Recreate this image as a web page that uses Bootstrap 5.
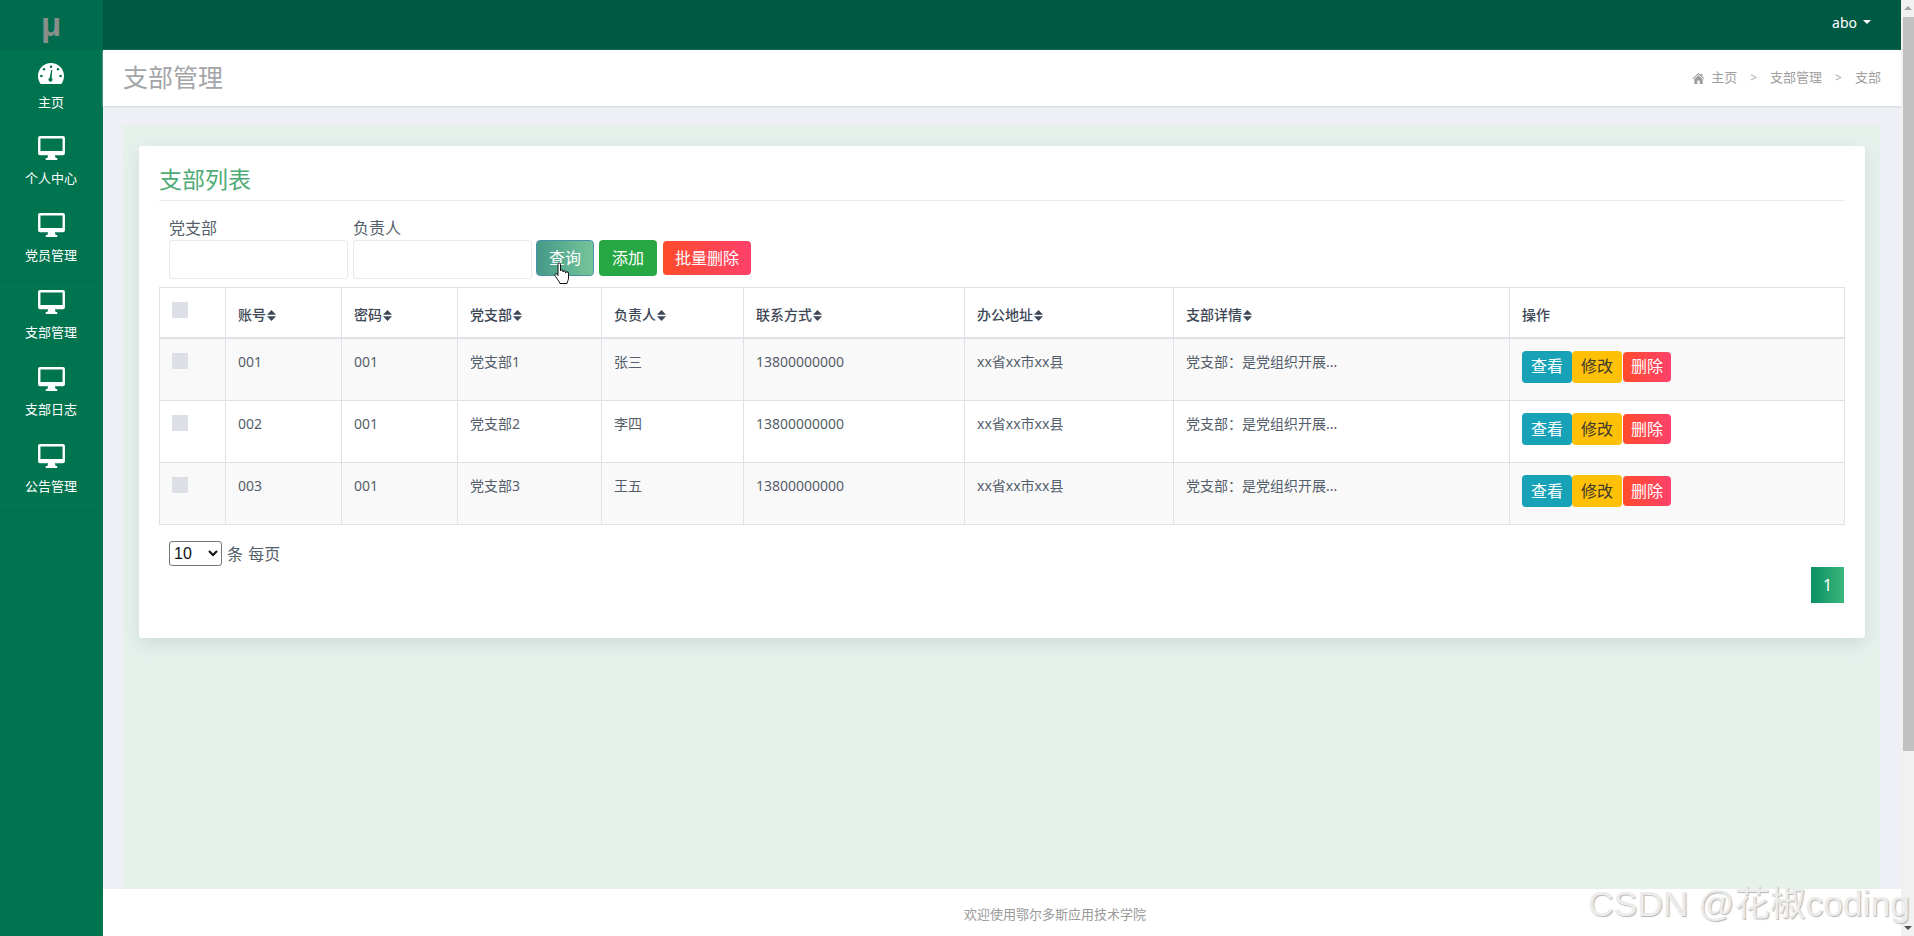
<!DOCTYPE html>
<html lang="zh-CN">
<head>
    <meta charset="UTF-8">
    <title>支部管理</title>
    <link href="https://cdn.jsdelivr.net/npm/bootstrap@5.3.0/dist/css/bootstrap.min.css" rel="stylesheet">
    <style>
        html, body { height: 100%; overflow: hidden; }
        body { font-family: "Noto Sans", "Noto Sans CJK SC", sans-serif; font-size: 14px; color: #555e6b; background: #eef0f5; }
        .app-shell { height: 936px; }
        .side-menu { width: 103px; background: #00734f; flex: none; }
        .side-logo { height: 50px; background: #006c4d; color: #8a8f8c; font-family: "Liberation Sans", sans-serif; font-size: 33px; font-weight: 700; line-height: 50px; text-align: center; padding-right: 1px; }
        .side-item { height: 77px; border-bottom: 1px solid #006e4c; color: #fff; font-size: 13px; text-align: center; padding: 9px 1px 0 0; }
        .side-item-home { padding-top: 13px; }
        .side-item svg { display: block; margin: 0 auto 9px; }
        .top-strip { height: 50px; background: #005a43; color: #fff; font-size: 14px; padding: 0 30px 6px 0; }
        .user-caret { width: 0; height: 0; border: 4px solid transparent; border-top-color: #fff; border-bottom: 0; margin-left: 6px; }
        .page-head { height: 56px; background: #fff; box-shadow: 0 1px 2px #cfd2da; padding: 0 20px 0 20px; position: relative; }
        .page-head h1 { font-size: 25px; font-weight: 400; color: #a3a5a9; margin: 0 0 2px; }
        .crumbs { color: #a0a0a0; font-size: 13px; gap: 13px; }
        .crumbs i { font-style: normal; font-size: 12px; color: #aaa; }
        .crumbs svg { margin-right: 6px; }
        .page-body { padding: 19px 21px 0 20px; height: 783px; }
        .green-panel { background: #e7f1ec; height: 764px; padding: 21px 15px 0 16px; }
        .list-panel { height: 492px; background: #fff; border-radius: 3px; box-shadow: 0 6px 18px rgba(80, 100, 130, .16); padding: 20px; }
        .list-title { color: #4eab77; font-size: 23px; font-weight: 400; line-height: 26px; height: 35px; margin: 0 0 15px; border-bottom: 1px solid #e9ecef; }
        .filter-bar { padding-left: 10px; height: 71px; }
        .filter-bar label { display: block; font-size: 16px; line-height: 24px; color: #555e6b; }
        .filter-input { display: block; width: 179px; height: 39px; border: 1px solid #e6e9ee; border-radius: 3px; margin-right: 5px; }
        .btn-q, .btn-a, .btn-d { color: #fff; font-size: 16px; border-radius: 4px; padding: 0; border: 0; margin-top: 24px; }
        .btn-q { width: 58px; height: 36px; background: linear-gradient(to right, #459a88, #75c49a); border: 1px solid #4a8fa8; margin-left: -1px; }
        .btn-a { width: 58px; height: 36px; background: #28a745; margin-left: 5px; }
        .btn-d { width: 88px; height: 34px; margin: 25px 0 0 6px; background: linear-gradient(to right, #ff4b2b, #ff416c); }
        .grid-table { margin: 0; width: 1686px; table-layout: fixed; border-color: #dee2e6; color: #555e6b; }
        .grid-table th { height: 50px; font-size: 14px; font-weight: 500; color: #3e4756; padding: 12px; border-bottom-width: 2px; vertical-align: bottom; line-height: 21px; }
        .grid-table td { height: 62px; padding: 12px; vertical-align: top; font-size: 14px; line-height: 21px; }
        .grid-table tbody tr:first-child td { height: 63px; }
        .grid-table th:first-child { vertical-align: top; }
        .grid-table.table-striped > tbody > tr:nth-of-type(odd) > * { --bs-table-accent-bg: #f9f9fa; color: #555e6b; }
        .tick-box { display: block; width: 16px; height: 16px; margin-top: 2px; background: #dcdfe6; }
        .sort-arrows { display: inline-block; vertical-align: -1px; margin-left: 1px; }
        .row-btn { height: 32px; width: 50px; font-size: 16px; padding: 0; border: 0; color: #fff; border-radius: 4px; }
        .row-btn-view { background: #17a2b8; }
        .row-btn-edit { background: #ffc107; color: #3d3a2a; }
        .row-btn-del { width: 48px; height: 30px; margin-left: 1px; background: linear-gradient(to right, #ff4b2b, #ff416c); }
        .size-select { width: 53px; height: 25px; font-size: 16px; color: #111; border: 1px solid #767676; border-radius: 3px; background: #fff; font-family: "Liberation Sans", sans-serif; }
        .size-row { padding: 16px 0 0 10px; font-size: 16px; gap: 5px; word-spacing: 1px; }
        .page-one { width: 33px; height: 36px; background: linear-gradient(to right, #0a8f66, #3cb67a); color: #fff; font-size: 16px; margin: 1px 1px 0 auto; }
        .foot-strip { height: 47px; background: #fff; color: #9a9a9a; font-size: 13px; padding: 4px 0 0 106px; }
        .fake-scroll { width: 13px; flex: none; background: #f1f1f1; position: relative; }
        .fake-scroll-thumb { width: 11px; height: 734px; margin: 17px 0 0 2px; background: #c1c1c1; }
        .scroll-up, .scroll-down { position: absolute; left: 3px; width: 0; height: 0; border: 4px solid transparent; }
        .scroll-up { top: 6px; border-top: 0; border-bottom-color: #a3a3a3; }
        .scroll-down { bottom: 6px; border-bottom: 0; border-top-color: #505050; }
        .water-mark { position: absolute; right: 4px; bottom: 12px; font-family: "Liberation Sans", "Noto Sans CJK SC", sans-serif; font-size: 35.5px; line-height: 40px; color: #ececec; text-shadow: 1px 1px 1px #b5b5b5; white-space: nowrap; }
        .hand-cursor { position: absolute; left: 554px; top: 262px; }
    </style>
</head>
<body>
<div class="app-shell d-flex position-relative">
    <!-- Sidebar -->
    <div class="side-menu">
        <div class="side-logo">μ</div>
        <div class="side-item side-item-home">
            <svg width="26" height="21" viewBox="0 0 26 21"><path fill="#fff" fill-rule="evenodd" d="M13 0C5.800 0 0 5.800 0 13c0 2.900 1 5.700 2.700 7.900l.3.100h20l.3-.1C25 18.700 26 15.900 26 13 26 5.800 20.200 0 13 0ZM13 2.400a1.300 1.300 0 1 1 0 2.600 1.300 1.300 0 0 1 0-2.600ZM6 5a1.300 1.300 0 1 1 0 2.600A1.300 1.300 0 0 1 6 5Zm14 0a1.300 1.300 0 1 1 0 2.600A1.300 1.300 0 0 1 20 5ZM3.400 11.700a1.300 1.300 0 1 1 0 2.600 1.300 1.300 0 0 1 0-2.600Zm19.200 0a1.300 1.300 0 1 1 0 2.600 1.300 1.300 0 0 1 0-2.600ZM14.300 7l-.6 8a2 2 0 1 1-2.100-.1L13.300 7Z"/></svg>
            主页
        </div>
        <div class="side-item">
            <svg width="27" height="24" viewBox="0 0 28 25"><path fill="#fff" fill-rule="evenodd" d="M2 0h24a2 2 0 0 1 2 2v16a2 2 0 0 1-2 2h-8.500l.8 3H20v2H8v-2h1.700l.8-3H2a2 2 0 0 1-2-2V2a2 2 0 0 1 2-2Zm.5 2.500v13h23v-13Z"/></svg>
            个人中心
        </div>
        <div class="side-item">
            <svg width="27" height="24" viewBox="0 0 28 25"><path fill="#fff" fill-rule="evenodd" d="M2 0h24a2 2 0 0 1 2 2v16a2 2 0 0 1-2 2h-8.500l.8 3H20v2H8v-2h1.700l.8-3H2a2 2 0 0 1-2-2V2a2 2 0 0 1 2-2Zm.5 2.500v13h23v-13Z"/></svg>
            党员管理
        </div>
        <div class="side-item">
            <svg width="27" height="24" viewBox="0 0 28 25"><path fill="#fff" fill-rule="evenodd" d="M2 0h24a2 2 0 0 1 2 2v16a2 2 0 0 1-2 2h-8.500l.8 3H20v2H8v-2h1.700l.8-3H2a2 2 0 0 1-2-2V2a2 2 0 0 1 2-2Zm.5 2.500v13h23v-13Z"/></svg>
            支部管理
        </div>
        <div class="side-item">
            <svg width="27" height="24" viewBox="0 0 28 25"><path fill="#fff" fill-rule="evenodd" d="M2 0h24a2 2 0 0 1 2 2v16a2 2 0 0 1-2 2h-8.500l.8 3H20v2H8v-2h1.700l.8-3H2a2 2 0 0 1-2-2V2a2 2 0 0 1 2-2Zm.5 2.500v13h23v-13Z"/></svg>
            支部日志
        </div>
        <div class="side-item">
            <svg width="27" height="24" viewBox="0 0 28 25"><path fill="#fff" fill-rule="evenodd" d="M2 0h24a2 2 0 0 1 2 2v16a2 2 0 0 1-2 2h-8.500l.8 3H20v2H8v-2h1.700l.8-3H2a2 2 0 0 1-2-2V2a2 2 0 0 1 2-2Zm.5 2.500v13h23v-13Z"/></svg>
            公告管理
        </div>
    </div>

    <!-- Main -->
    <div class="flex-grow-1 d-flex flex-column">
        <div class="top-strip d-flex align-items-center justify-content-end">abo<span class="user-caret"></span></div>
        <div class="page-head d-flex align-items-center justify-content-between">
            <h1>支部管理</h1>
            <div class="crumbs d-flex align-items-center">
                <span><svg width="13" height="11" viewBox="0 0 12 11"><path fill="#9c9c9c" d="M6 0 0 5.500l.7.700L6 1.500l5.300 4.700.7-.7L9.800 3.500V.7H8.300v1.400ZM1.800 6.300V11h3V7.500h2.400V11h3V6.300L6 2.600Z"/></svg>主页</span>
                <i>&gt;</i><span>支部管理</span><i>&gt;</i><span>支部</span>
            </div>
        </div>
        <div class="page-body">
            <div class="green-panel">
                <div class="list-panel">
                    <h5 class="list-title">支部列表</h5>
                    <div class="filter-bar d-flex align-items-start">
                        <div><label>党支部</label><input class="filter-input" type="text"></div>
                        <div><label>负责人</label><input class="filter-input" type="text"></div>
                        <button class="btn-q" type="button">查询</button>
                        <button class="btn-a" type="button">添加</button>
                        <button class="btn-d" type="button">批量删除</button>
                    </div>
                    <table class="table table-bordered table-striped grid-table">
                        <colgroup>
                            <col style="width:66px"><col style="width:116px"><col style="width:116px"><col style="width:144px"><col style="width:142px"><col style="width:221px"><col style="width:209px"><col style="width:336px"><col>
                        </colgroup>
                        <thead>
                            <tr>
                                <th><span class="tick-box"></span></th>
                                <th>账号<svg class="sort-arrows" width="9" height="11" viewBox="0 0 9 11"><path fill="#3e4756" d="M4.500 0 9 4.700H0ZM0 6.300h9L4.500 11Z"/></svg></th>
                                <th>密码<svg class="sort-arrows" width="9" height="11" viewBox="0 0 9 11"><path fill="#3e4756" d="M4.500 0 9 4.700H0ZM0 6.300h9L4.500 11Z"/></svg></th>
                                <th>党支部<svg class="sort-arrows" width="9" height="11" viewBox="0 0 9 11"><path fill="#3e4756" d="M4.500 0 9 4.700H0ZM0 6.300h9L4.500 11Z"/></svg></th>
                                <th>负责人<svg class="sort-arrows" width="9" height="11" viewBox="0 0 9 11"><path fill="#3e4756" d="M4.500 0 9 4.700H0ZM0 6.300h9L4.500 11Z"/></svg></th>
                                <th>联系方式<svg class="sort-arrows" width="9" height="11" viewBox="0 0 9 11"><path fill="#3e4756" d="M4.500 0 9 4.700H0ZM0 6.300h9L4.500 11Z"/></svg></th>
                                <th>办公地址<svg class="sort-arrows" width="9" height="11" viewBox="0 0 9 11"><path fill="#3e4756" d="M4.500 0 9 4.700H0ZM0 6.300h9L4.500 11Z"/></svg></th>
                                <th>支部详情<svg class="sort-arrows" width="9" height="11" viewBox="0 0 9 11"><path fill="#3e4756" d="M4.500 0 9 4.700H0ZM0 6.300h9L4.500 11Z"/></svg></th>
                                <th>操作</th>
                            </tr>
                        </thead>
                        <tbody>
                            <tr>
                                <td><span class="tick-box"></span></td><td>001</td><td>001</td><td>党支部1</td><td>张三</td><td>13800000000</td><td>xx省xx市xx县</td><td>党支部：是党组织开展...</td>
                                <td><div class="d-flex align-items-center"><button class="row-btn row-btn-view">查看</button><button class="row-btn row-btn-edit">修改</button><button class="row-btn row-btn-del">删除</button></div></td>
                            </tr>
                            <tr>
                                <td><span class="tick-box"></span></td><td>002</td><td>001</td><td>党支部2</td><td>李四</td><td>13800000000</td><td>xx省xx市xx县</td><td>党支部：是党组织开展...</td>
                                <td><div class="d-flex align-items-center"><button class="row-btn row-btn-view">查看</button><button class="row-btn row-btn-edit">修改</button><button class="row-btn row-btn-del">删除</button></div></td>
                            </tr>
                            <tr>
                                <td><span class="tick-box"></span></td><td>003</td><td>001</td><td>党支部3</td><td>王五</td><td>13800000000</td><td>xx省xx市xx县</td><td>党支部：是党组织开展...</td>
                                <td><div class="d-flex align-items-center"><button class="row-btn row-btn-view">查看</button><button class="row-btn row-btn-edit">修改</button><button class="row-btn row-btn-del">删除</button></div></td>
                            </tr>
                        </tbody>
                    </table>
                    <div class="size-row d-flex align-items-center">
                        <select class="size-select"><option>10</option></select> 条 每页
                    </div>
                    <div class="page-one d-flex align-items-center justify-content-center">1</div>
                </div>
            </div>
        </div>
        <div class="foot-strip d-flex align-items-center justify-content-center">欢迎使用鄂尔多斯应用技术学院</div>
    </div>

    <!-- Page scrollbar -->
    <div class="fake-scroll"><span class="scroll-up"></span><div class="fake-scroll-thumb"></div><span class="scroll-down"></span></div>

    <svg class="hand-cursor" width="17" height="23" viewBox="0 0 17 23"><path fill="#fff" stroke="#111" stroke-width="1" d="M4 1.500c1 -1 2.500 -.5 2.500 1V9c0-1.500 2.500-1.500 2.500 0v1c0-1.500 2.500-1.500 2.500 0v1c0-1.500 3-1.500 3 0v5c0 2-1 3-1.500 5.500H6C5 19 3 17 1 13.500c-.7-1.500 1-2.500 2-1.500l1 1.500Z"/></svg>
    <div class="water-mark">CSDN @花椒coding</div>
</div>
<script src="https://cdn.jsdelivr.net/npm/bootstrap@5.3.0/dist/js/bootstrap.bundle.min.js"></script>
</body>
</html>
